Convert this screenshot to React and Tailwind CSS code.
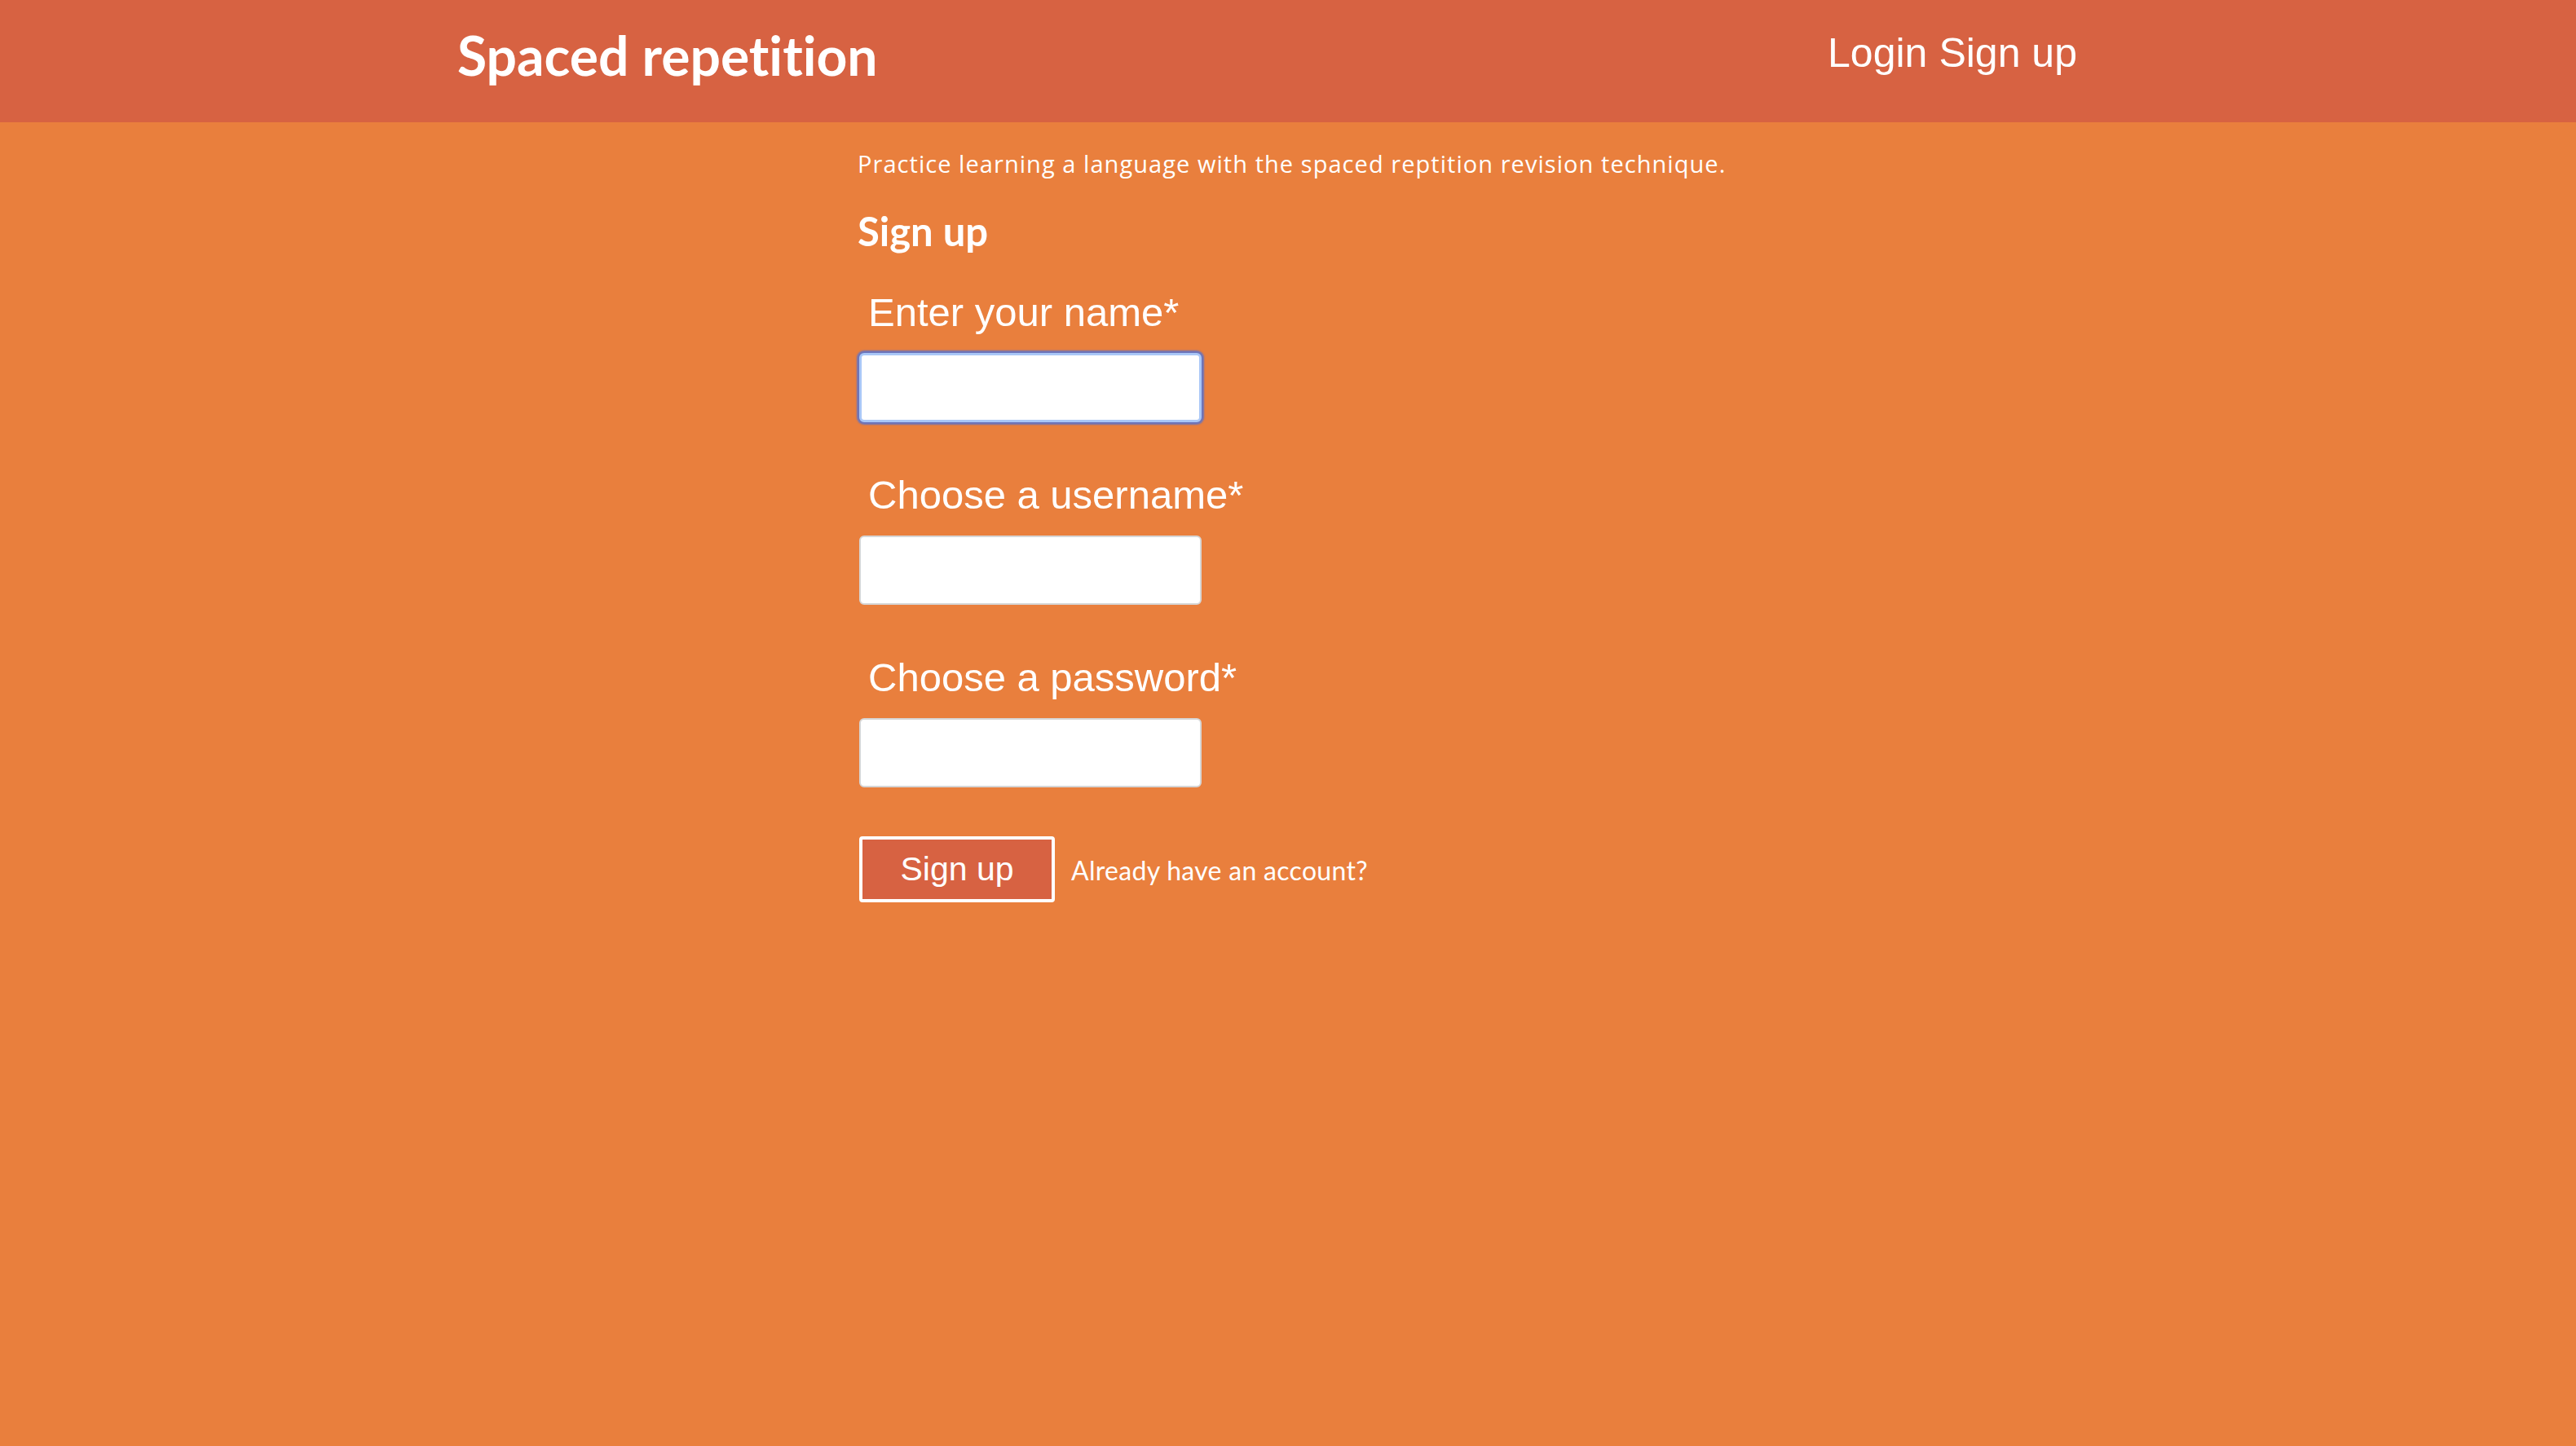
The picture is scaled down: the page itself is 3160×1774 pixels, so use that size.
import { useState } from "react";

const UBU = "font-['Lato','Noto_Sans',sans-serif] [font-variant-ligatures:none]";
const ARIAL = "font-['Liberation_Sans',Arial,sans-serif]";

const FIELDS = [
  { id: "name", label: "Enter your name*", type: "text", focused: true },
  { id: "username", label: "Choose a username*", type: "text" },
  { id: "password", label: "Choose a password*", type: "password" },
];

const Field = ({ label, type, focused, value, onChange, first }) => (
  <div className={first ? "mt-[44px]" : "mt-[61px]"}>
    <label className={`block ml-[13px] text-[49px] leading-[56px] text-white ${ARIAL}`}>
      {label}
    </label>
    <input
      type={type}
      value={value}
      onChange={onChange}
      className={`block mt-[22px] ml-[2px] w-[420px] h-[85px] bg-white rounded-[6px] outline-none px-3 text-[32px] ${
        focused
          ? "border-[3px] border-[#a9c7f7] shadow-[0_0_2px_3px_#6b74bb]"
          : "border-2 border-[#d6d6d6]"
      }`}
    />
  </div>
);

export default function App() {
  const [form, setForm] = useState({ name: "", username: "", password: "" });

  return (
    <div className={`min-h-screen bg-[#e97f3d] ${UBU}`}>
      <header className="flex items-start justify-between h-[150px] bg-[#d76242] pl-[561px] pr-[612px]">
        <h1 className="mt-[28px] text-[66px] leading-[80px] font-bold text-white">
          Spaced repetition
        </h1>
        <nav className={`mt-[35px] flex gap-[14px] text-[50px] leading-[60px] text-white ${ARIAL}`}>
          <a href="#">Login</a>
          <a href="#">Sign up</a>
        </nav>
      </header>

      <main className="pl-[1052px] pt-[34px] text-white">
        <p className="text-[29px] leading-[34px] whitespace-nowrap font-['Open_Sans',sans-serif] tracking-[1.05px]">
          Practice learning a language with the spaced reptition revision technique.
        </p>
        <h2 className="mt-[37px] text-[49px] leading-[56px] font-bold">Sign up</h2>

        <form onSubmit={(e) => e.preventDefault()}>
          {FIELDS.map((f, i) => (
            <Field
              key={f.id}
              {...f}
              first={i === 0}
              value={form[f.id]}
              onChange={(e) => setForm({ ...form, [f.id]: e.target.value })}
            />
          ))}

          <div className="flex items-center gap-[20px] mt-[60px]">
            <button
              type="submit"
              className={`ml-[2px] w-[240px] h-[81px] bg-[#d76242] border-4 border-white rounded-[4px] text-[41px] font-light text-white ${ARIAL}`}
            >
              Sign up
            </button>
            <a href="#" className="text-[32px] leading-[38px] mt-[2px] tracking-[0.3px]">
              Already have an account?
            </a>
          </div>
        </form>
      </main>
    </div>
  );
}
